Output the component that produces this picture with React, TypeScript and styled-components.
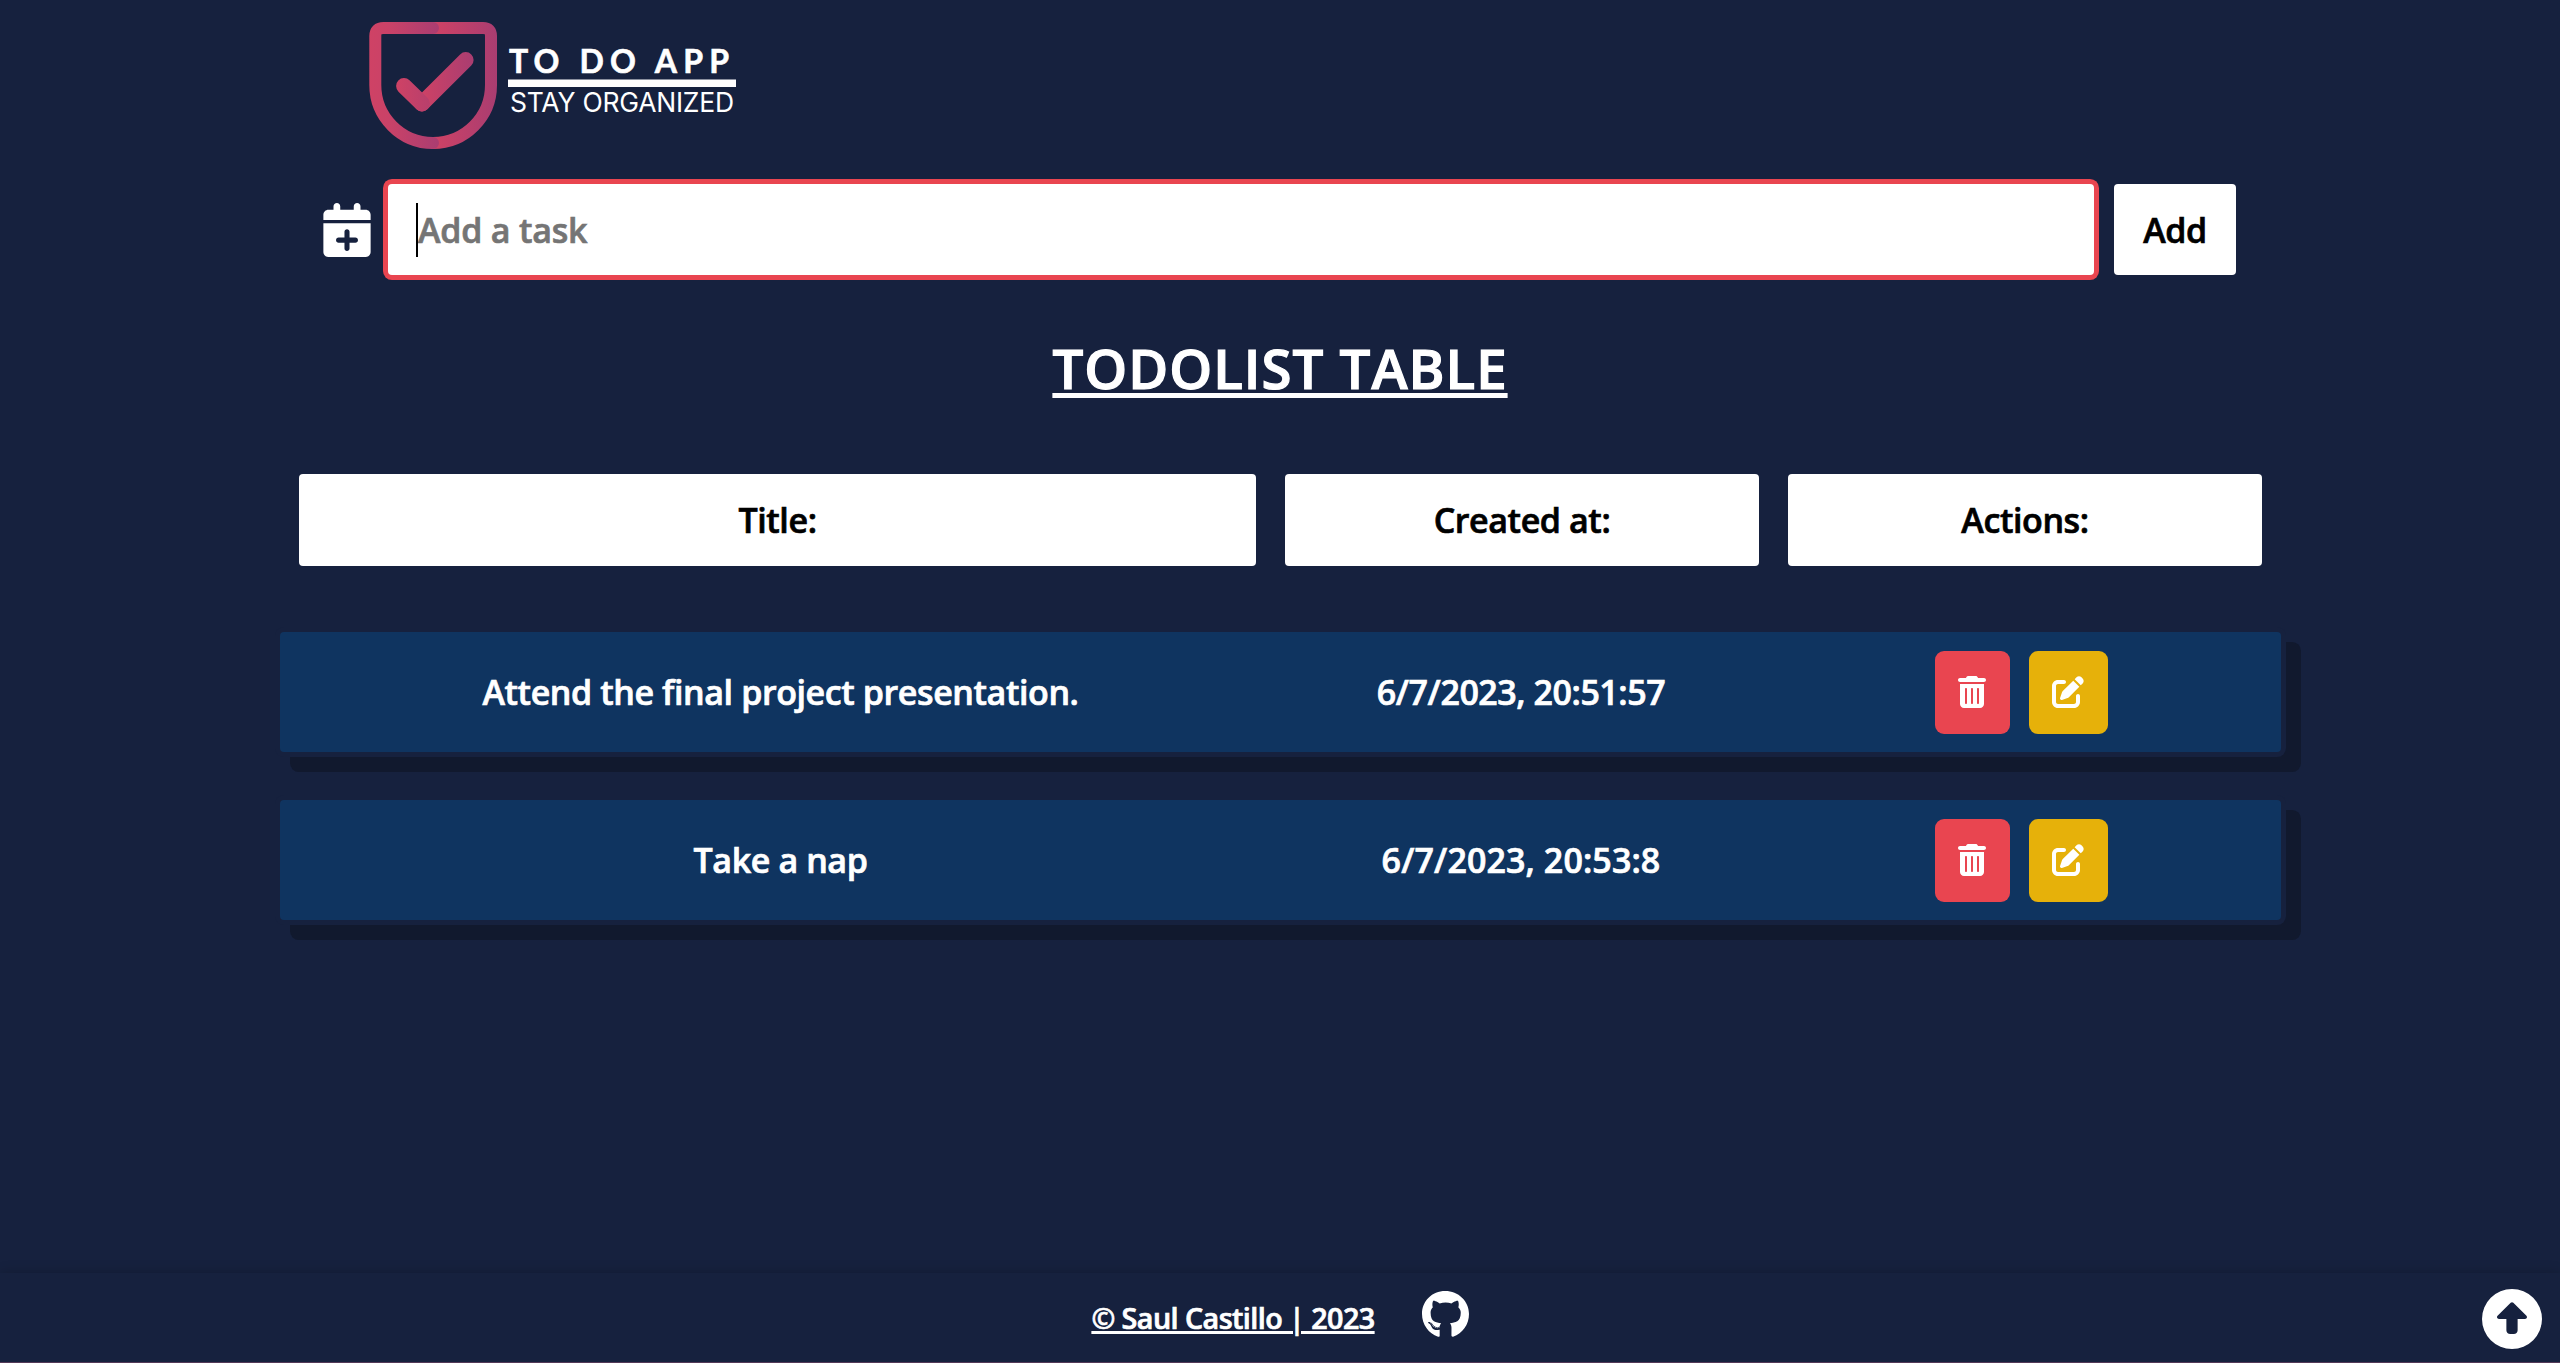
import React from 'react';
import styled, { createGlobalStyle } from 'styled-components';
import {
  FaCalendarPlus,
  FaCircleUp,
  FaGithub,
  FaPenToSquare,
  FaTrashCan,
} from 'react-icons/fa6';

const GlobalStyle = createGlobalStyle`
  * { box-sizing: border-box; }
  body {
    margin: 0;
    background: #16213e;
    color: #fff;
    font-family: "Open Sans", "Noto Sans", sans-serif;
    font-weight: 600;
    font-size: 34px;
    -webkit-text-stroke: 0.7px currentColor;
  }
`;

const Page = styled.div`
  display: flex;
  flex-direction: column;
  height: 1363px;
  overflow: hidden;
  border-bottom: 1px solid #543a58;
`;

const Header = styled.header`
  height: 184px;
  padding-left: 360px;
  -webkit-text-stroke: 0;
`;

const Form = styled.form`
  display: flex;
  align-items: center;
  height: 91px;
  margin: 0 324px 0 323px;
`;

const CalendarIcon = styled(FaCalendarPlus)`
  width: 48px;
  height: 54px;
  margin: 1px 17px 0 0;
`;

const Field = styled.label`
  display: flex;
  align-items: center;
  flex: 1;
  height: 100%;
  padding: 0 28px;
  margin-right: 20px;
  background: #fff;
  border-radius: 4px;
  box-shadow: 0 0 0 5px #e94550;
`;

const Caret = styled.span`
  width: 2px;
  height: 54px;
  background: #000;
`;

const TaskInput = styled.input`
  flex: 1;
  height: 60px;
  padding: 0;
  border: 0;
  outline: 0;
  background: transparent;
  font: inherit;
  letter-spacing: -0.2px;

  &::placeholder {
    color: #757575;
    opacity: 1;
    -webkit-text-stroke: 0.7px #757575;
  }
`;

const AddButton = styled.button`
  width: 122px;
  height: 100%;
  padding: 0;
  border: 0;
  border-radius: 4px;
  background: #fff;
  color: #000;
  font: inherit;
  letter-spacing: -0.4px;
`;

const Heading = styled.h1`
  margin: 53px 0 66px;
  font-size: 54.6px;
  font-weight: 600;
  line-height: 80px;
  letter-spacing: 1px;
  text-align: center;
  text-decoration: underline;
  text-decoration-thickness: 5px;
  text-underline-offset: 3.5px;
  -webkit-text-stroke: 1.2px currentColor;
`;

const TableHead = styled.div`
  display: grid;
  grid-template-columns: 957px 474px 474px;
  column-gap: 29px;
  margin: 0 298px 66px 299px;
`;

const HeadCell = styled.div`
  display: flex;
  align-items: center;
  justify-content: center;
  height: 92px;
  border-radius: 4px;
  background: #fff;
  color: #000;
  letter-spacing: -0.4px;
`;

const TaskList = styled.ul`
  display: flex;
  flex-direction: column;
  gap: 48px;
  margin: 0 279px 0 280px;
  padding: 0;
  list-style: none;
`;

const TaskRow = styled.li`
  display: grid;
  grid-template-columns: 1001px 480px 1fr;
  align-items: center;
  height: 120px;
  border-radius: 4px;
  background: #0f3460;
  box-shadow: 0 0 0 5px #16213e, 15px 15px 0 5px #11192e;
`;

const Cell = styled.span<{ $tracking?: number }>`
  text-align: center;
  letter-spacing: ${(p) => p.$tracking ?? -0.4}px;
`;

const Actions = styled.div`
  display: flex;
  justify-content: center;
  gap: 19px;
`;

const ActionButton = styled.button<{ $color: string }>`
  display: flex;
  align-items: center;
  justify-content: center;
  height: 83px;
  padding: 0 23.5px;
  border: 0;
  border-radius: 9px;
  background: ${(p) => p.$color};
  color: #fff;
`;

const TrashIcon = styled(FaTrashCan)`
  width: 28px;
  height: 32px;
`;

const EditIcon = styled(FaPenToSquare)`
  width: 32px;
  height: 32px;
`;

const Footer = styled.footer`
  position: relative;
  display: flex;
  align-items: center;
  justify-content: center;
  gap: 47px;
  height: 89px;
  margin-top: auto;
  background: #16213e;
  box-shadow: 0 0 12px rgba(0, 0, 0, 0.2);
`;

const Copyright = styled.a`
  font-size: 28.7px;
  letter-spacing: -0.55px;
  text-decoration: underline;
  text-decoration-thickness: 2.5px;
  text-underline-offset: 2px;
`;

const GithubIcon = styled(FaGithub)`
  width: 47px;
  height: 49px;
  margin-bottom: 6px;
`;

const ToTop = styled(FaCircleUp)`
  position: absolute;
  right: 18px;
  top: 16px;
  width: 60px;
  height: 60px;
`;

function Logo() {
  return (
    <svg width="400" height="170" viewBox="360 0 400 170" fill="none">
      <defs>
        <linearGradient id="left" gradientUnits="userSpaceOnUse" x1="369" y1="0" x2="439" y2="0">
          <stop offset="0" stopColor="#cf4265" />
          <stop offset="0.3" stopColor="#c94268" />
          <stop offset="1" stopColor="#aa3d71" />
        </linearGradient>
        <linearGradient id="right" gradientUnits="userSpaceOnUse" x1="433" y1="0" x2="497" y2="0">
          <stop offset="0" stopColor="#cf4265" />
          <stop offset="1" stopColor="#a93d71" />
        </linearGradient>
        <linearGradient id="short" gradientUnits="userSpaceOnUse" x1="396" y1="0" x2="434" y2="0">
          <stop offset="0" stopColor="#cf4265" />
          <stop offset="1" stopColor="#b53f6d" />
        </linearGradient>
        <linearGradient id="long" gradientUnits="userSpaceOnUse" x1="420" y1="0" x2="474" y2="0">
          <stop offset="0" stopColor="#cf4265" />
          <stop offset="1" stopColor="#a93d71" />
        </linearGradient>
      </defs>
      <g strokeLinecap="round" strokeLinejoin="round">
        <path d="M433 28H483Q491 28 491 36V85A58 58 0 0 1 433 143" stroke="url(#right)" strokeWidth="12" />
        <path d="M433 28H383.5Q375.3 28 375.3 36V85A58 58 0 0 0 433 143" stroke="url(#left)" strokeWidth="12" />
        <path d="M422 103.5L465.7 60" stroke="url(#long)" strokeWidth="15.8" />
        <path d="M404 86L422 103.5" stroke="url(#short)" strokeWidth="15.8" />
      </g>
      <text
        x="509"
        y="72.8"
        textLength="220"
        fill="#fff"
        stroke="#fff"
        strokeWidth="0.6"
        fontFamily="Lato"
        fontWeight="700"
        fontSize="32"
      >
        TO DO APP
      </text>
      <rect x="508" y="79.5" width="228" height="7.5" fill="#fff" />
      <text x="510" y="112" textLength="224" fill="#fff" fontFamily="Inter" fontWeight="400" fontSize="26.5">
        STAY ORGANIZED
      </text>
    </svg>
  );
}

const tasks = [
  { title: 'Attend the final project presentation.', createdAt: '6/7/2023, 20:51:57', tracking: -0.45 },
  { title: 'Take a nap', createdAt: '6/7/2023, 20:53:8', tracking: 0.1 },
];

export default function App() {
  return (
    <Page>
      <GlobalStyle />
      <Header>
        <Logo />
      </Header>
      <Form>
        <CalendarIcon />
        <Field>
          <Caret />
          <TaskInput placeholder="Add a task" />
        </Field>
        <AddButton type="button">Add</AddButton>
      </Form>
      <Heading>TODOLIST TABLE</Heading>
      <TableHead>
        <HeadCell>Title:</HeadCell>
        <HeadCell>Created at:</HeadCell>
        <HeadCell>Actions:</HeadCell>
      </TableHead>
      <TaskList>
        {tasks.map((task) => (
          <TaskRow key={task.createdAt}>
            <Cell>{task.title}</Cell>
            <Cell $tracking={task.tracking}>{task.createdAt}</Cell>
            <Actions>
              <ActionButton $color="#e94550">
                <TrashIcon />
              </ActionButton>
              <ActionButton $color="#e6b10a">
                <EditIcon />
              </ActionButton>
            </Actions>
          </TaskRow>
        ))}
      </TaskList>
      <Footer>
        <Copyright>© Saul Castillo | 2023</Copyright>
        <GithubIcon />
        <ToTop />
      </Footer>
    </Page>
  );
}
